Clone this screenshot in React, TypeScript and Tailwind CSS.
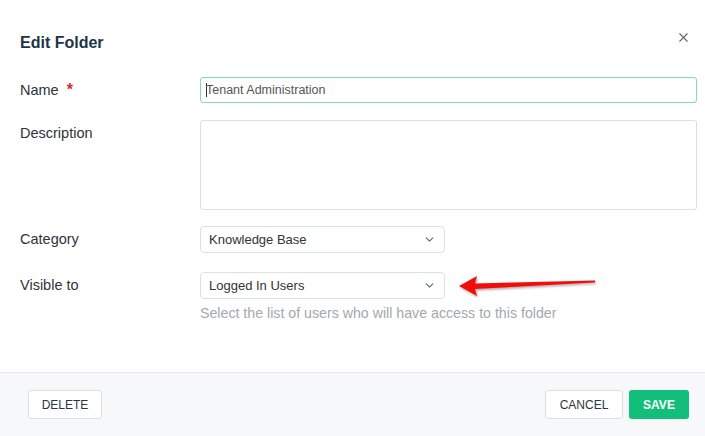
import { X, ChevronDown } from "lucide-react"

const FONT = { fontFamily: '"Liberation Sans", Arial, sans-serif' }

function Label({ children }: { children: React.ReactNode }) {
  return <div className="w-[180px] shrink-0 text-[14.5px] text-[#2f3337]">{children}</div>
}

function Select({ value }: { value: string }) {
  return (
    <div className="flex h-[27px] w-[245px] items-center justify-between rounded-[4px] border border-[#dcdfe3] bg-white pl-[8px] pr-[8px] text-[13px] text-[#333]">
      <span>{value}</span>
      <ChevronDown className="h-[13px] w-[13px] text-[#6b7580]" strokeWidth={2.5} />
    </div>
  )
}

export default function App() {
  return (
    <div className="flex h-[436px] w-[705px] flex-col bg-white" style={FONT}>
      {/* Header */}
      <div className="flex items-start justify-between pl-[20px] pr-[14px] pt-[31px]">
        <h1 className="text-[16px] font-bold text-[#1d3448]">Edit Folder</h1>
        <X className="mt-[-1px] h-[15px] w-[15px] text-[#5b6670]" strokeWidth={1.8} />
      </div>

      {/* Body */}
      <div className="flex flex-1 flex-col pl-[20px] pr-[8px] pt-[22px]">
        <div className="flex items-center">
          <Label>
            Name <span className="ml-[4px] text-[16px] font-bold text-[#e0252b]">*</span>
          </Label>
          <div className="flex h-[26px] flex-1 items-center rounded-[3px] border border-[#7fdcb6] pl-[5px] text-[12.5px] text-[#555]">
            <span className="mr-[-1px] inline-block h-[14px] w-px bg-[#333]" />
            Tenant Administration
          </div>
        </div>

        <div className="mt-[17px] flex items-start">
          <Label>
            <div className="pt-[3px]">Description</div>
          </Label>
          <div className="h-[90px] flex-1 rounded-[3px] border border-[#dcdfe3]" />
        </div>

        <div className="mt-[16px] flex items-center">
          <Label>Category</Label>
          <Select value="Knowledge Base" />
        </div>

        <div className="mt-[19px] flex items-start">
          <Label>
            <div className="pt-[3px]">Visible to</div>
          </Label>
          <div className="flex flex-col">
            <div className="flex items-center">
              <Select value="Logged In Users" />
              <svg width="142" height="24" viewBox="0 0 142 24" className="ml-[12px] mt-[1px]">
                <defs>
                  <filter id="sh" x="-10%" y="-50%" width="120%" height="200%">
                    <feDropShadow dx="1" dy="1.5" stdDeviation="1" floodColor="#000" floodOpacity="0.35" />
                  </filter>
                </defs>
                <path
                  d="M2 12 L20 2 L18 9.5 L138 6.5 L138 8.5 L18 15 L20 22 Z"
                  fill="#f20d0d"
                  filter="url(#sh)"
                />
              </svg>
            </div>
            <div className="mt-[4px] text-[14.2px] text-[#a3a9af]">
              Select the list of users who will have access to this folder
            </div>
          </div>
        </div>
      </div>

      {/* Footer */}
      <div className="flex h-[64px] items-center justify-between border-t border-[#e6e8eb] bg-[#f7f8fa] pl-[28px] pr-[16px]">
        <button className="h-[29px] w-[74px] rounded-[3px] border border-[#dcdfe3] bg-white text-[12px] text-[#2a3640]">
          DELETE
        </button>
        <div className="flex gap-[6px]">
          <button className="h-[29px] w-[78px] rounded-[3px] border border-[#dcdfe3] bg-white text-[12px] text-[#2a3640]">
            CANCEL
          </button>
          <button className="h-[29px] w-[60px] rounded-[3px] bg-[#11bf7b] text-[12px] font-bold text-white">
            SAVE
          </button>
        </div>
      </div>
    </div>
  )
}
